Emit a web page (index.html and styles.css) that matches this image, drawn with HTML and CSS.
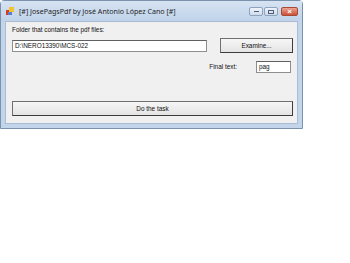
FILE: index.html
```html
<!DOCTYPE html>
<html lang="es">
<head>
    <meta charset="UTF-8">
    <title>JosePagsPdf</title>
    <link rel="stylesheet" href="styles.css">
</head>
<body>
    <div class="window">
        <div class="titlebar">
            <svg class="app-icon" width="8" height="8" viewBox="0 0 8 8">
                <rect x="0" y="3" width="5" height="5" fill="#d83a2a"/>
                <rect x="3" y="0" width="5" height="5" fill="#f2c230"/>
                <rect x="2" y="5" width="4" height="3" fill="#5a7fd0"/>
            </svg>
            <span class="title">[#] JosePagsPdf by José Antonio López Cano [#]</span>
            <div class="controls">
                <div class="ctl"><span class="ctl-min"></span></div>
                <div class="ctl"><span class="ctl-max"></span></div>
                <div class="ctl ctl-close">&#215;</div>
            </div>
        </div>
        <div class="client">
            <div class="label">Folder that contains the pdf files:</div>
            <div class="row-folder">
                <div class="textbox folder">D:\NERO13390\MCS-022</div>
                <button class="btn examine">Examine...</button>
            </div>
            <div class="row-final">
                <span class="label">Final text:</span>
                <div class="textbox final">pag</div>
            </div>
            <button class="btn task">Do the task</button>
        </div>
    </div>
</body>
</html>
```

FILE: styles.css
```css
body {
    margin: 0;
    background-color: #ffffff;
    font-family: "Liberation Sans", Arial, sans-serif;
}
.window {
    width: 303px;
    height: 129px;
    box-sizing: border-box;
    background-color: #c3d5ea;
    border: 1px solid #7b92ad;
    border-radius: 4px 4px 0 0;
    padding: 0 4px 4px 4px;
    display: flex;
    flex-direction: column;
}
.titlebar {
    height: 20px;
    display: flex;
    align-items: center;
    background: linear-gradient(#d6e3f2, #c0d3ea);
    margin: 0 -4px;
    padding: 0 4px 0 5px;
}
.app-icon {
    margin-right: 5px;
}
.title {
    font-family: "Noto Sans", "Liberation Sans", sans-serif;
    font-size: 7.1px;
    color: #1e1e1e;
    flex: 1;
}
.controls {
    display: flex;
    gap: 1px;
    margin-top: 1px;
}
.ctl {
    width: 12px;
    height: 7px;
    border: 1px solid #8ea3bd;
    border-radius: 2px;
    background: linear-gradient(#eef3f9, #cfdbea);
    display: flex;
    align-items: center;
    justify-content: center;
}
.ctl-min {
    width: 5px;
    height: 1px;
    background-color: #4d5f78;
}
.ctl-max {
    width: 4px;
    height: 2px;
    border: 1px solid #4d5f78;
}
.ctl.ctl-close {
    width: 15px;
    margin-left: 2px;
    background: linear-gradient(#eaa594, #cc4e36);
    border-color: #a84a36;
    color: #ffffff;
    font-size: 8px;
    font-weight: bold;
    line-height: 7px;
}
.client {
    flex: 1;
    background-color: #f0f0f0;
    border: 1px solid #a9bcd3;
    padding: 4px 4px 0 6px;
    display: flex;
    flex-direction: column;
    font-size: 6.4px;
    color: #111111;
}
.label {
    height: 8px;
    line-height: 8px;
}
.row-folder {
    margin-top: 4px;
    display: flex;
    align-items: center;
    justify-content: space-between;
}
.textbox {
    box-sizing: border-box;
    background-color: #ffffff;
    border: 1px solid #8e8f8f;
    border-top-color: #5f6061;
    padding: 0 2px;
    line-height: 10px;
}
.textbox.folder {
    width: 195px;
    height: 12px;
}
.btn {
    box-sizing: border-box;
    font-family: inherit;
    font-size: 6.4px;
    color: #111111;
    background: linear-gradient(#f6f6f6, #e4e4e4);
    border: 1px solid #707070;
    border-right-color: #3c3c3c;
    border-bottom-color: #3c3c3c;
    border-radius: 0;
    padding: 0;
}
.btn.examine {
    width: 73px;
    height: 15px;
}
.row-final {
    margin-top: 8px;
    display: flex;
    align-items: center;
    justify-content: flex-end;
    padding-right: 2px;
    gap: 19px;
}
.textbox.final {
    width: 35px;
    height: 12px;
}
.btn.task {
    margin-top: 28px;
    width: 281px;
    height: 15px;
}
```
